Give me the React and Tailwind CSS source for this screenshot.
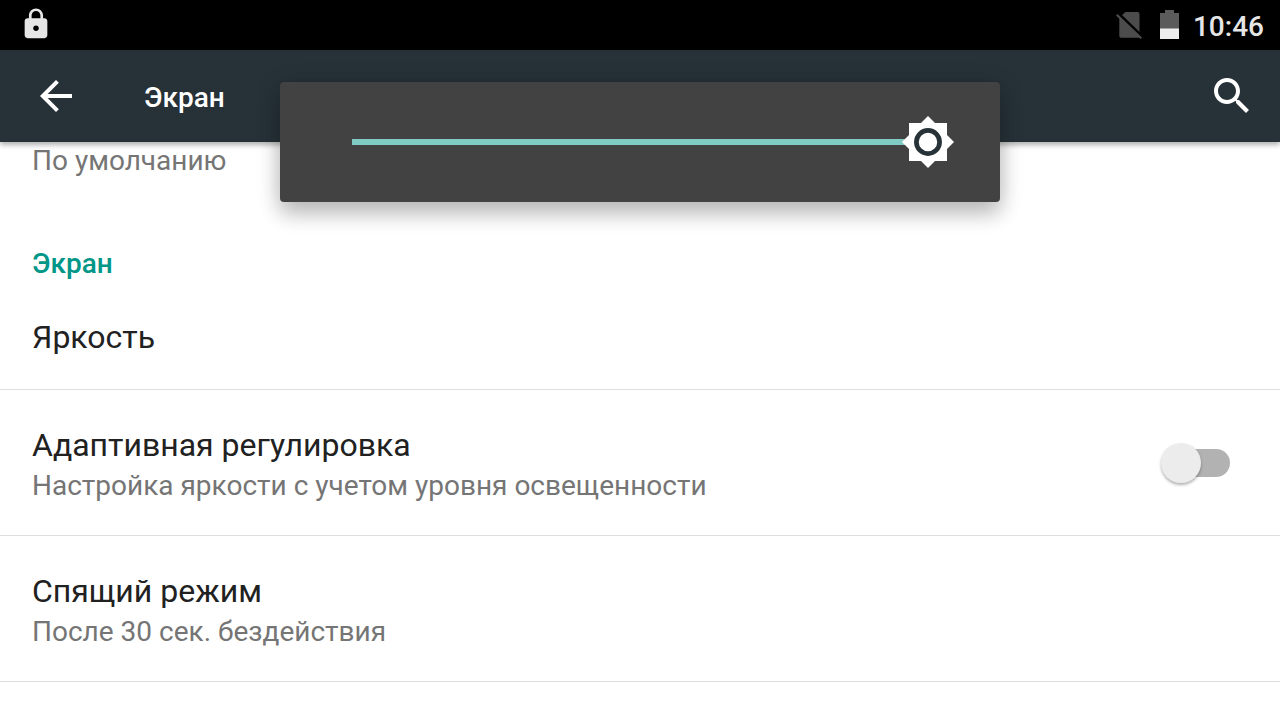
import React, { useState } from 'react';

const LockIcon = () => (
    <svg viewBox="0 0 24 24" className="h-[34px] w-[34px]" fill="#e6e6e6" aria-hidden="true">
        <path d="M18 8h-1V6c0-2.76-2.24-5-5-5S7 3.24 7 6v2H6c-1.1 0-2 .9-2 2v10c0 1.1.9 2 2 2h12c1.1 0 2-.9 2-2V10c0-1.1-.9-2-2-2zm-6 9c-1.1 0-2-.9-2-2s.9-2 2-2 2 .9 2 2-.9 2-2 2zm3.1-9H8.900V6c0-1.710 1.390-3.100 3.100-3.100s3.100 1.390 3.100 3.100v2z" />
    </svg>
);

const NoSimIcon = () => (
    <svg viewBox="0 0 28 30" className="h-[30px] w-7" fill="#4c4c4c" aria-hidden="true">
        <path d="M9.500 3h12q2 0 2 2v18L6 6z" />
        <path d="M0 6.500L1.500 5L26 28.500l-1.500 1.500-1.500-1.300H5q-1.700 0-1.700-1.700V9.700z" />
    </svg>
);

const BatteryIcon = () => (
    <svg viewBox="0 0 19 30" className="h-[30px] w-[19px]" aria-hidden="true">
        <path fill="#5b5b5b" d="M5 1h9v3h5v16H0V4h5z" />
        <path fill="#ededed" d="M0 19.500h19V30H0z" />
    </svg>
);

const BackIcon = () => (
    <svg viewBox="0 0 24 24" className="h-12 w-12" fill="#fff" aria-hidden="true">
        <path d="M20 11H7.830l5.590-5.590L12 4l-8 8 8 8 1.410-1.410L7.830 13H20v-2z" />
    </svg>
);

const SearchIcon = () => (
    <svg viewBox="0 0 24 24" className="h-12 w-12" fill="#fff" aria-hidden="true">
        <path d="M15.500 14h-.79l-.28-.27C15.410 12.590 16 11.110 16 9.500 16 5.910 13.090 3 9.500 3S3 5.910 3 9.500 5.910 16 9.500 16c1.610 0 3.090-.59 4.230-1.570l.27.28v.79l5 4.990L20.490 19l-4.990-5zm-6 0C7.010 14 5 11.990 5 9.500S7.010 5 9.500 5 14 7.010 14 9.500 11.990 14 9.500 14z" />
    </svg>
);

const SunIcon = () => (
    <svg viewBox="-26 -26 52 52" className="h-[52px] w-[52px]" aria-hidden="true">
        <path fill="#fff" d="M-19 -19H19V19H-19z" />
        <path fill="#fff" d="M0 -26L26 0L0 26L-26 0z" />
        <circle r="11.600" fill="none" stroke="#263238" strokeWidth="4.700" />
    </svg>
);

const BrightnessPanel = () => {
    const [level, setLevel] = useState(100);

    return (
        <div className="absolute top-[82px] left-1/2 flex h-[120px] w-[720px] max-w-full -translate-x-1/2 items-center rounded bg-[#424242] px-[72px] shadow-[0_14px_20px_rgba(0,0,0,0.16),0_4px_24px_rgba(0,0,0,0.2)]">
            <div className="relative flex h-12 flex-1 items-center">
                <div className="h-[6px] w-full bg-[#5f5f5f]">
                    <div className="h-full bg-[#80cbc4]" style={{ width: `${level}%` }} />
                </div>
                <span className="absolute top-1/2 -translate-x-1/2 -translate-y-1/2" style={{ left: `${level}%` }}>
                    <SunIcon />
                </span>
                <input
                    type="range"
                    min="0"
                    max="100"
                    value={level}
                    onChange={(e) => setLevel(Number(e.target.value))}
                    aria-label="Яркость"
                    className="absolute inset-0 h-full w-full cursor-pointer opacity-0"
                />
            </div>
        </div>
    );
};

const SettingRow = ({ title, summary, children }) => (
    <li className="flex items-center justify-between border-b border-[#dedede] py-[30px] pr-[50px] pl-8">
        <div className="pt-1">
            <h3 className="text-[32px] leading-[42px] text-[#212121]">{title}</h3>
            <p className="text-[28px] leading-[39px] text-[#757575]">{summary}</p>
        </div>
        {children}
    </li>
);

const App = () => {
    const [adaptive, setAdaptive] = useState(false);

    return (
        <div className="relative min-h-screen overflow-hidden bg-white font-[Roboto,sans-serif]">
            <div className="flex h-[50px] items-center justify-between bg-black pr-4 pb-[2px] pl-[19px]">
                <LockIcon />
                <div className="flex items-center">
                    <NoSimIcon />
                    <span className="ml-4">
                        <BatteryIcon />
                    </span>
                    <time className="ml-[14px] pt-[6px] text-[28px] leading-8 font-medium text-[#e6e6e6]">10:46</time>
                </div>
            </div>

            <header className="relative flex h-[92px] items-center bg-[#263238] pr-6 pl-8 shadow-[0_3px_5px_rgba(0,0,0,0.3)]">
                <button type="button" aria-label="Назад">
                    <BackIcon />
                </button>
                <h1 className="ml-16 pt-1 text-[28px] leading-8 font-medium text-white">Экран</h1>
                <button type="button" aria-label="Поиск" className="ml-auto">
                    <SearchIcon />
                </button>
            </header>

            <main>
                <p className="px-8 text-[28px] leading-[38px] text-[#757575]">По умолчанию</p>
                <h2 className="mt-[65px] px-8 text-[28px] leading-[38px] font-medium text-[#009688]">Экран</h2>
                <ul>
                    <li className="border-b border-[#dedede] px-8 pt-[33px] pb-[31px]">
                        <h3 className="text-[32px] leading-[42px] text-[#212121]">Яркость</h3>
                    </li>
                    <SettingRow title="Адаптивная регулировка" summary="Настройка яркости с учетом уровня освещенности">
                        <label className="relative flex h-7 w-[62px] items-center rounded-full bg-[#b2b2b2]">
                            <input
                                type="checkbox"
                                role="switch"
                                checked={adaptive}
                                onChange={(e) => setAdaptive(e.target.checked)}
                                aria-label="Адаптивная регулировка"
                                className="peer absolute inset-0 h-full w-full opacity-0"
                            />
                            <span className="-ml-[7px] h-10 w-10 rounded-full bg-[#ececec] shadow-[0_2px_3px_rgba(0,0,0,0.3)] peer-checked:ml-[29px] peer-checked:bg-[#009688]" />
                        </label>
                    </SettingRow>
                    <SettingRow title="Спящий режим" summary="После 30 сек. бездействия" />
                </ul>
            </main>

            <BrightnessPanel />
        </div>
    );
};

export default App;
